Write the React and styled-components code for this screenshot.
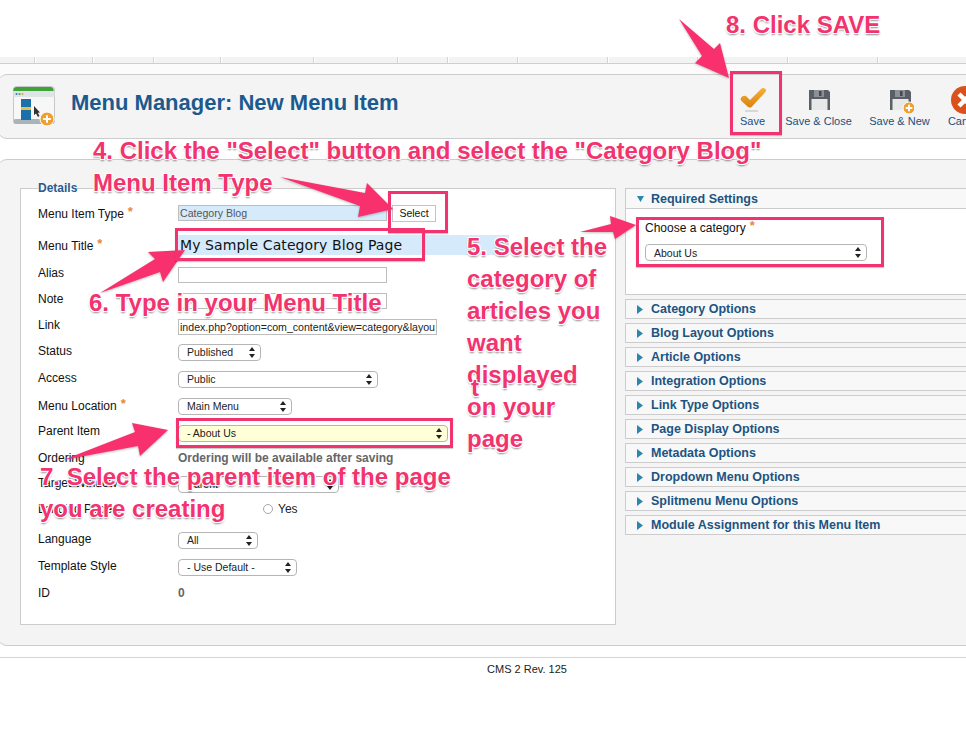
import React from "react";
import styled, { createGlobalStyle } from "styled-components";

const PINK = "#f2336f";

const GlobalStyle = createGlobalStyle`
  html, body {
    margin: 0;
    padding: 0;
    background: #fff;
  }
  body {
    font-family: "Liberation Sans", Arial, sans-serif;
    color: #000;
  }
`;

const Page = styled.div`
  position: relative;
  width: 966px;
  height: 755px;
  overflow: hidden;
  padding-top: 57px;
  box-sizing: border-box;
`;

const NavBar = styled.div`
  display: flex;
  height: 6px;
  background: #f3f3f3;
  border-bottom: 1px solid #cfcfcf;
`;

const NavItem = styled.div`
  box-sizing: border-box;
  width: ${(p) => p.$w}px;
  flex: none;
  border-right: 1px solid #d4d4d4;
  box-shadow: 1px 0 0 #fff;
`;

const Strip = styled.div`
  height: 10px;
  background: #fbfbfb;
`;

const Toolbar = styled.div`
  display: flex;
  align-items: center;
  box-sizing: border-box;
  height: 65px;
  margin: 0 -30px 20px -3px;
  padding-left: 15px;
  background: #f4f4f4;
  border: 1px solid #cccccc;
  border-radius: 10px;
`;

const Title = styled.h1`
  flex: 1;
  margin: 0 0 7px 14px;
  font-size: 22px;
  line-height: 26px;
  font-weight: bold;
  color: #1c5a8e;
`;

const ToolButtons = styled.div`
  display: flex;
  flex: none;
  width: 270px;
  height: 63px;
`;

const ToolButton = styled.div`
  flex: none;
  width: ${(p) => p.$w}px;
  display: flex;
  flex-direction: column;
  align-items: center;
  padding-top: 11px;
  box-sizing: border-box;
  font-size: 11px;
  line-height: 14px;
  color: #1d4f7c;
  white-space: nowrap;
  svg {
    display: block;
  }
`;

const MainPanel = styled.div`
  display: flex;
  box-sizing: border-box;
  height: 487px;
  margin: 0 -30px 0 -3px;
  padding: 21px 0 0 22px;
  background: #f4f4f4;
  border: 1px solid #cccccc;
  border-radius: 10px;
`;

const Details = styled.fieldset`
  flex: none;
  width: 596px;
  height: 444px;
  box-sizing: border-box;
  margin: 0;
  padding: 0 0 0 17px;
  background: #fff;
  border: 1px solid #cccccc;
`;

const Legend = styled.legend`
  padding: 0;
  font-size: 12px;
  line-height: 14px;
  font-weight: bold;
  color: #2b5a8f;
`;

const Row = styled.div`
  display: flex;
  align-items: center;
  height: 22px;
  margin-top: ${(p) => p.$gap}px;
`;

const Label = styled.label`
  flex: none;
  width: 140px;
  font-size: 12px;
  color: #111;
`;

const Star = styled.span`
  margin-left: 4px;
  font-size: 13px;
  font-weight: bold;
  color: #e8883a;
  position: relative;
  top: -2px;
`;

const TextInput = styled.input`
  box-sizing: border-box;
  flex: none;
  width: ${(p) => p.$w}px;
  height: ${(p) => p.$h || 16}px;
  margin: ${(p) => p.$mt || 0}px 0 0;
  padding: 0 1px;
  border: 1px solid #bdbdbd;
  background: ${(p) => p.$bg || "#fff"};
  font-family: "Liberation Sans", Arial, sans-serif;
  font-size: 10.6px;
  color: ${(p) => p.$color || "#222"};
  outline: none;
`;

const BigInput = styled(TextInput)`
  font-family: "DejaVu Sans", sans-serif;
  font-size: 14px;
  letter-spacing: 0.1px;
  color: #111;
  border-color: #d5ebfb;
`;

const SelectButton = styled.button`
  flex: none;
  box-sizing: border-box;
  width: 44px;
  height: 17px;
  margin-left: 5px;
  padding: 0;
  background: #fff;
  border: 1px solid #c4c4c4;
  font-family: "Liberation Sans", Arial, sans-serif;
  font-size: 10.5px;
  color: #111;
`;

const SelectBox = styled.div`
  flex: none;
  box-sizing: border-box;
  display: flex;
  align-items: center;
  justify-content: space-between;
  width: ${(p) => p.$w}px;
  height: 17px;
  margin-top: ${(p) => p.$mt ?? 2}px;
  padding: 0 5px 0 8px;
  background: ${(p) => p.$bg || "#fff"};
  border: 1px solid #b5b5b5;
  border-radius: 4px;
  font-size: 10.5px;
  color: #222;
  white-space: nowrap;
`;

const StaticValue = styled.span`
  font-size: 12px;
  font-weight: bold;
  color: #666;
`;

const RadioGroup = styled.div`
  display: flex;
  align-items: center;
  margin-left: 85px;
  font-size: 12px;
  color: #222;
`;

const Radio = styled.span`
  box-sizing: border-box;
  width: 10px;
  height: 10px;
  margin-right: 5px;
  border: 1px solid #a8a8a8;
  border-radius: 50%;
  background: #fff;
`;

const SideColumn = styled.div`
  flex: none;
  width: 400px;
  margin: 7px 0 0 9px;
  display: flex;
  flex-direction: column;
  gap: 4px;
`;

const Slider = styled.div`
  background: #fff;
  border: 1px solid #cccccc;
`;

const SliderHead = styled.div`
  display: flex;
  align-items: center;
  box-sizing: border-box;
  height: ${(p) => (p.$open ? 20 : 18)}px;
  padding-left: 11px;
  background: #f8f8f8;
  border-bottom: ${(p) => (p.$open ? "1px solid #cccccc" : "none")};
  font-size: 12.5px;
  font-weight: bold;
  color: #1c5482;
  svg {
    flex: none;
    margin-right: 8px;
  }
`;

const SliderBody = styled.div`
  height: 85px;
  box-sizing: border-box;
  padding: 11px 0 0 19px;
  font-size: 12px;
  color: #111;
`;

const CategorySelect = styled(SelectBox)`
  margin-top: 9px;
`;

const Footer = styled.footer`
  margin: 11px -30px 0 0;
  border-top: 1px solid #d4d4d4;
  padding-top: 5px;
  padding-right: 30px;
  padding-left: 88px;
  text-align: center;
  font-size: 11px;
  line-height: 13px;
  color: #222;
`;

/* screenshot annotations drawn on top of the page */
const ArrowLayer = styled.svg`
  position: absolute;
  left: 0;
  top: 0;
  width: 966px;
  height: 755px;
  pointer-events: none;
  filter: drop-shadow(0 1px 1px rgba(0, 0, 0, 0.25));
`;

const PinkBox = styled.div`
  position: absolute;
  box-sizing: border-box;
  left: ${(p) => p.$x}px;
  top: ${(p) => p.$y}px;
  width: ${(p) => p.$w}px;
  height: ${(p) => p.$h}px;
  border: 3px solid ${PINK};
  box-shadow: 0 1px 1px rgba(0, 0, 0, 0.2);
`;

const Note = styled.div`
  position: absolute;
  left: ${(p) => p.$x}px;
  top: ${(p) => p.$y}px;
  font-size: 24px;
  line-height: 32px;
  font-weight: bold;
  color: ${PINK};
  white-space: nowrap;
  text-shadow: -1px -1px 0 #fff, 1px -1px 0 #fff, -1px 1px 0 #fff, 1px 1px 0 #fff,
    0 2px 2px rgba(0, 0, 0, 0.45);
`;

const Chevrons = () => (
  <svg width="6" height="11" viewBox="0 0 6 11">
    <path d="M3 0 L6 4 H0 Z M0 7 H6 L3 11 Z" fill="#222" />
  </svg>
);

const TriangleRight = () => (
  <svg width="6" height="9" viewBox="0 0 6 9">
    <path d="M0 0 L6 4.5 L0 9 Z" fill="#2a88ac" />
  </svg>
);

const TriangleDown = () => (
  <svg width="7" height="6" viewBox="0 0 7 6" style={{ marginRight: 7 }}>
    <path d="M0 0 H7 L3.5 6 Z" fill="#2a88ac" />
  </svg>
);

const PlusBadge = ({ cx, cy, r }) => (
  <g>
    <circle cx={cx} cy={cy} r={r} fill="#f0a030" stroke="#fff" strokeWidth="1" />
    <path
      d={`M${cx - r * 0.55} ${cy} H${cx + r * 0.55} M${cx} ${cy - r * 0.55} V${cy + r * 0.55}`}
      stroke="#fff"
      strokeWidth="2"
    />
  </g>
);

const MenuLogo = () => (
  <svg width="44" height="42" viewBox="0 0 44 42" style={{ flex: "none" }}>
    <rect x="0.5" y="0.5" width="41" height="37" rx="3" fill="#f7f7f7" stroke="#c8c8c8" />
    <path d="M0.5 5 a3 3 0 0 1 3 -4 h34 a3 3 0 0 1 3 4 z" fill="#3fa33a" />
    <rect x="0.5" y="5" width="41" height="6" fill="#dfe4e6" />
    <circle cx="3.5" cy="8" r="1" fill="#2f7fb0" />
    <circle cx="6.5" cy="8" r="1" fill="#3fa33a" />
    <circle cx="9.5" cy="8" r="1" fill="#e8a030" />
    <rect x="0.5" y="33" width="41" height="5" rx="2" fill="#a9b4ba" />
    <rect x="8" y="13" width="10" height="21" fill="#1a70aa" />
    <rect x="8" y="21" width="10" height="3" fill="#e8c040" />
    <path d="M21 20 L21 29 L23 27.5 L25 31 L26.5 30 L24.8 26.8 L27 26.5 Z" fill="#333" />
    <PlusBadge cx={34} cy={33} r={7} />
  </svg>
);

const SaveCheck = () => (
  <svg width="28" height="28" viewBox="0 0 28 28">
    <defs>
      <linearGradient id="checkFill" x1="0" y1="0" x2="0" y2="1">
        <stop offset="0" stopColor="#f5b13a" />
        <stop offset="1" stopColor="#d9820f" />
      </linearGradient>
    </defs>
    <path
      d="M2 12 C3 10 6 9 7.5 10.5 L11 14 L22 3 C24 1 27.5 2.5 27 5 C26.5 6 26 6.5 25 7.5 L13.5 20 C12 22 10 22 8.5 20.5 L2.5 15 C1.5 14 1.5 13 2 12 Z"
      fill="url(#checkFill)"
    />
    <path d="M6 25 H19" stroke="#cfcfcf" strokeWidth="1.5" />
  </svg>
);

const Floppy = ({ plus }) => (
  <svg width="28" height="28" viewBox="0 0 28 28">
    <path d="M4 4 H23 L25 6 V24 H4 Z" fill="#5a5f66" />
    <rect x="9" y="4" width="10" height="7" fill="#8d9197" />
    <rect x="14" y="5" width="2.5" height="5" fill="#45494f" />
    <rect x="6.5" y="13" width="16" height="11" fill="#e8e8e8" />
    {plus && <PlusBadge cx={23} cy={22} r={6} />}
  </svg>
);

const CancelIcon = () => (
  <svg width="30" height="28" viewBox="0 0 30 28">
    <circle cx="15" cy="14" r="14" fill="#d9521b" />
    <path d="M9 8 L21 20 M21 8 L9 20" stroke="#fff" strokeWidth="4.5" />
  </svg>
);

const navWidths = [35, 58, 61, 67, 93, 84, 50, 70, 90, 90, 90, 90];
const options = [
  "Category Options",
  "Blog Layout Options",
  "Article Options",
  "Integration Options",
  "Link Type Options",
  "Page Display Options",
  "Metadata Options",
  "Dropdown Menu Options",
  "Splitmenu Menu Options",
  "Module Assignment for this Menu Item",
];

export default function App() {
  return (
    <Page>
      <GlobalStyle />
      <NavBar>
        {navWidths.map((w, i) => (
          <NavItem key={i} $w={w} />
        ))}
      </NavBar>
      <Strip />

      <Toolbar>
        <MenuLogo />
        <Title>Menu Manager: New Menu Item</Title>
        <ToolButtons>
          <ToolButton $w={55}>
            <SaveCheck />
            Save
          </ToolButton>
          <ToolButton $w={77}>
            <Floppy />
            Save &amp; Close
          </ToolButton>
          <ToolButton $w={85}>
            <Floppy plus />
            Save &amp; New
          </ToolButton>
          <ToolButton $w={46}>
            <CancelIcon />
            Cancel
          </ToolButton>
        </ToolButtons>
      </Toolbar>

      <MainPanel>
        <Details>
          <Legend>Details</Legend>
          <Row $gap={7}>
            <Label>
              Menu Item Type<Star>*</Star>
            </Label>
            <TextInput $w={209} $bg="#d5ebfb" $color="#555" readOnly value="Category Blog" />
            <SelectButton>Select</SelectButton>
          </Row>
          <Row $gap={10}>
            <Label>
              Menu Title<Star>*</Star>
            </Label>
            <BigInput $w={331} $h={20} $bg="#d5ebfb" readOnly value="My Sample Category Blog Page" />
          </Row>
          <Row $gap={6}>
            <Label>Alias</Label>
            <TextInput $w={209} $mt={3} readOnly value="" />
          </Row>
          <Row $gap={4}>
            <Label>Note</Label>
            <TextInput $w={209} $mt={3} readOnly value="" />
          </Row>
          <Row $gap={4}>
            <Label>Link</Label>
            <TextInput
              $w={259}
              $mt={3}
              readOnly
              value="index.php?option=com_content&view=category&layout=blog"
            />
          </Row>
          <Row $gap={4}>
            <Label>Status</Label>
            <SelectBox $w={83}>
              Published
              <Chevrons />
            </SelectBox>
          </Row>
          <Row $gap={5}>
            <Label>Access</Label>
            <SelectBox $w={200}>
              Public
              <Chevrons />
            </SelectBox>
          </Row>
          <Row $gap={5}>
            <Label>
              Menu Location<Star>*</Star>
            </Label>
            <SelectBox $w={114}>
              Main Menu
              <Chevrons />
            </SelectBox>
          </Row>
          <Row $gap={4}>
            <Label>Parent Item</Label>
            <SelectBox $w={270} $mt={4} $bg="#ffffd8">
              - About Us
              <Chevrons />
            </SelectBox>
          </Row>
          <Row $gap={5}>
            <Label>Ordering</Label>
            <StaticValue>Ordering will be available after saving</StaticValue>
          </Row>
          <Row $gap={3}>
            <Label>Target Window</Label>
            <SelectBox $w={161}>
              Parent
              <Chevrons />
            </SelectBox>
          </Row>
          <Row $gap={4}>
            <Label>Landing Page</Label>
            <RadioGroup>
              <Radio />
              Yes
            </RadioGroup>
          </Row>
          <Row $gap={8}>
            <Label>Language</Label>
            <SelectBox $w={80}>
              All
              <Chevrons />
            </SelectBox>
          </Row>
          <Row $gap={5}>
            <Label>Template Style</Label>
            <SelectBox $w={119}>
              - Use Default -
              <Chevrons />
            </SelectBox>
          </Row>
          <Row $gap={5}>
            <Label>ID</Label>
            <StaticValue>0</StaticValue>
          </Row>
        </Details>

        <SideColumn>
          <Slider>
            <SliderHead $open>
              <TriangleDown />
              Required Settings
            </SliderHead>
            <SliderBody>
              Choose a category<Star>*</Star>
              <CategorySelect $w={222}>
                About Us
                <Chevrons />
              </CategorySelect>
            </SliderBody>
          </Slider>
          {options.map((name) => (
            <Slider key={name}>
              <SliderHead>
                <TriangleRight />
                {name}
              </SliderHead>
            </Slider>
          ))}
        </SideColumn>
      </MainPanel>

      <Footer>CMS 2 Rev. 125</Footer>

      <ArrowLayer viewBox="0 0 966 755">
        <g fill="#f9306e">
          <polygon points="280,177 365,193 367,183 393,209 358,217 360,206" />
          <polygon points="679,19 714,49 720,43 729,78 695,63 702,56" />
          <polygon points="100,293 155,259 148,252 185,250 163,282 160,272" />
          <polygon points="580,232 611,224 610,216 636,225 615,239 613,232" />
          <polygon points="63,460 135,432 132,423 168,430 140,456 138,446" />
        </g>
      </ArrowLayer>

      <PinkBox $x={730} $y={71} $w={52} $h={64} />
      <PinkBox $x={388} $y={191} $w={60} $h={42} />
      <PinkBox $x={175} $y={228} $w={250} $h={33} />
      <PinkBox $x={176} $y={418} $w={277} $h={30} />
      <PinkBox $x={636} $y={217} $w={248} $h={50} />

      <Note $x={726} $y={9}>8. Click SAVE</Note>
      <Note $x={93} $y={135}>
        4. Click the "Select" button and select the "Category Blog"
        <br />
        Menu Item Type
      </Note>
      <Note $x={467} $y={231}>
        5. Select the
        <br />
        category of
        <br />
        articles you
        <br />
        want
        <br />
        displayed
        <br />
        on your
        <br />
        page
      </Note>
      <Note $x={471} $y={372}>t</Note>
      <Note $x={89} $y={287}>6. Type in your Menu Title</Note>
      <Note $x={40} $y={461}>
        7. Select the parent item of the page
        <br />
        you are creating
      </Note>
    </Page>
  );
}
